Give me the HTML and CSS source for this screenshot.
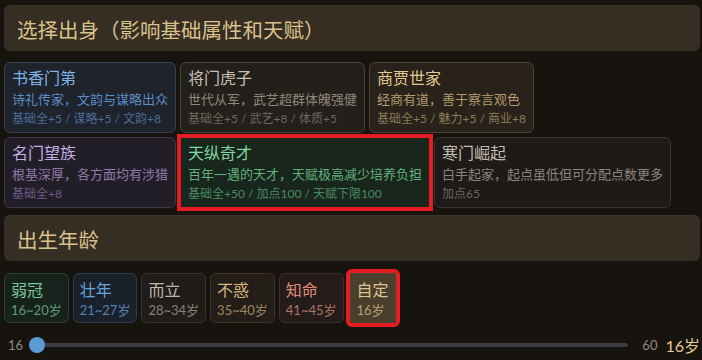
FILE: index.html
```html
<!DOCTYPE html>
<html lang="zh-CN">

<head>
    <meta charset="UTF-8">
    <meta name="viewport" content="width=device-width, initial-scale=1.0">
    <title>出身与年龄</title>
    <link rel="stylesheet" href="styles.css">
</head>

<body>
    <div class="section-title">选择出身（影响基础属性和天赋）</div>

    <div class="origin-list">
        <div class="card card-blue">
            <div class="card-name">书香门第</div>
            <div class="card-desc">诗礼传家，文韵与谋略出众</div>
            <div class="card-stats">基础全+5 / 谋略+5 / 文韵+8</div>
        </div>
        <div class="card card-brown">
            <div class="card-name">将门虎子</div>
            <div class="card-desc">世代从军，武艺超群体魄强健</div>
            <div class="card-stats">基础全+5 / 武艺+8 / 体质+5</div>
        </div>
        <div class="card card-gold">
            <div class="card-name">商贾世家</div>
            <div class="card-desc">经商有道，善于察言观色</div>
            <div class="card-stats">基础全+5 / 魅力+5 / 商业+8</div>
        </div>
        <div class="card card-purple">
            <div class="card-name">名门望族</div>
            <div class="card-desc">根基深厚，各方面均有涉猎</div>
            <div class="card-stats">基础全+8</div>
        </div>
        <div class="card card-green selected">
            <div class="card-name">天纵奇才</div>
            <div class="card-desc">百年一遇的天才，天赋极高减少培养负担</div>
            <div class="card-stats">基础全+50 / 加点100 / 天赋下限100</div>
        </div>
        <div class="card card-gray">
            <div class="card-name">寒门崛起</div>
            <div class="card-desc">白手起家，起点虽低但可分配点数更多</div>
            <div class="card-stats">加点65</div>
        </div>
    </div>

    <div class="section-title">出生年龄</div>

    <div class="age-list">
        <div class="age age-green">
            <div class="age-name">弱冠</div>
            <div class="age-range">16~20岁</div>
        </div>
        <div class="age age-blue">
            <div class="age-name">壮年</div>
            <div class="age-range">21~27岁</div>
        </div>
        <div class="age age-gray">
            <div class="age-name">而立</div>
            <div class="age-range">28~34岁</div>
        </div>
        <div class="age age-gold">
            <div class="age-name">不惑</div>
            <div class="age-range">35~40岁</div>
        </div>
        <div class="age age-red">
            <div class="age-name">知命</div>
            <div class="age-range">41~45岁</div>
        </div>
        <div class="age age-custom selected">
            <div class="age-name">自定</div>
            <div class="age-range" id="customAge">16岁</div>
        </div>
    </div>

    <div class="slider-row">
        <span class="slider-min">16</span>
        <input type="range" id="ageSlider" class="slider" min="16" max="60" value="16">
        <span class="slider-max">60</span>
        <span class="slider-value" id="ageValue">16岁</span>
    </div>

    <script>
        const slider = document.getElementById('ageSlider');

        slider.addEventListener('input', function () {
            document.getElementById('ageValue').textContent = slider.value + '岁';
            document.getElementById('customAge').textContent = slider.value + '岁';
        });

        document.querySelectorAll('.card').forEach(function (card) {
            card.addEventListener('click', function () {
                document.querySelector('.card.selected').classList.remove('selected');
                card.classList.add('selected');
            });
        });
    </script>
</body>

</html>
```

FILE: styles.css
```css
* {
    box-sizing: border-box;
    margin: 0;
    padding: 0;
}

body {
    background-color: #17130f;
    padding: 5px 2px 0 4px;
    font-family: 'Lato', 'Noto Sans CJK SC', sans-serif;
}

.section-title {
    display: flex;
    align-items: center;
    height: 46px;
    padding: 0 13px;
    background-color: #362d23;
    border-top: 1px solid #3e342a;
    border-radius: 6px;
    color: #d9c28c;
    font-size: 20.5px;
}

.origin-list {
    display: flex;
    flex-wrap: wrap;
    gap: 4px;
    margin: 11px 0 7px;
}

.card {
    padding: 4px 7px 3px;
    border: 1px solid;
    border-radius: 6px;
    cursor: pointer;
}

.card-name {
    font-size: 16px;
    line-height: 22px;
}

.card-desc {
    font-size: 13px;
    line-height: 20px;
}

.card-stats {
    font-size: 12px;
    line-height: 20px;
}

.card.selected {
    outline: 4px solid #e41d23;
    outline-offset: -1px;
    border-radius: 0;
}

.card-blue { background-color: #1e232c; border-color: #38414f; }
.card-blue .card-name { color: #7eb0e6; }
.card-blue .card-desc { color: #5c8cc4; }
.card-blue .card-stats { color: #4a6e98; }

.card-brown { background-color: #231f1b; border-color: #4a433a; }
.card-brown .card-name { color: #c9c0b2; }
.card-brown .card-desc { color: #908779; }
.card-brown .card-stats { color: #6e675d; }

.card-gold { background-color: #28221a; border-color: #4d4333; }
.card-gold .card-name { color: #e3c894; }
.card-gold .card-desc { color: #b39b6e; }
.card-gold .card-stats { color: #8c7a58; }

.card-purple { background-color: #221e27; border-color: #3e3846; }
.card-purple .card-name { color: #c4aee6; }
.card-purple .card-desc { color: #8e7aa8; }
.card-purple .card-stats { color: #6c5c86; }

.card-green { background-color: #18261d; border-color: #2c4a36; }
.card-green .card-name { color: #82d89e; }
.card-green .card-desc { color: #62b07c; }
.card-green .card-stats { color: #4a8a60; }

.card-gray { background-color: #1d1a17; border-color: #3a342e; }
.card-gray .card-name { color: #c4bcb2; }
.card-gray .card-desc { color: #8c857c; }
.card-gray .card-stats { color: #6c665e; }

.age-list {
    display: flex;
    gap: 4px;
    margin-top: 12px;
}

.age {
    padding: 4px 6px 2px;
    border: 1px solid;
    border-radius: 6px;
    cursor: pointer;
}

.age-name {
    font-size: 16px;
    line-height: 23px;
}

.age-range {
    font-size: 13px;
    line-height: 19px;
}

.age.selected {
    margin-left: 2px;
    outline: 4px solid #e41d23;
    outline-offset: 0;
}

.age-green { background-color: #18221d; border-color: #2d3f35; }
.age-green .age-name { color: #78c898; }
.age-green .age-range { color: #5c9c78; }

.age-blue { background-color: #1a212a; border-color: #2c3a48; }
.age-blue .age-name { color: #68a4dc; }
.age-blue .age-range { color: #5384b4; }

.age-gray { background-color: #201c19; border-color: #3a332c; }
.age-gray .age-name { color: #c2b8aa; }
.age-gray .age-range { color: #8a8176; }

.age-gold { background-color: #231e18; border-color: #3d3327; }
.age-gold .age-name { color: #d6b67e; }
.age-gold .age-range { color: #9e8660; }

.age-red { background-color: #251b19; border-color: #3e2e29; }
.age-red .age-name { color: #e08c7c; }
.age-red .age-range { color: #ad7566; }

.age-custom { background-color: #4a3e2d; border-color: #4f4230; border-radius: 2px; }
.age-custom .age-name { color: #dcc493; }
.age-custom .age-range { color: #b9a173; }

.slider-row {
    display: flex;
    align-items: center;
    gap: 6px;
    margin-top: 10px;
    padding-left: 4px;
}

.slider-min,
.slider-max {
    color: #8e8a85;
    font-size: 13px;
}

.slider-max {
    margin-left: 8px;
}

.slider-value {
    margin-left: 2px;
    color: #e6c98f;
    font-size: 16px;
}

.slider {
    flex: 1;
    height: 16px;
    -webkit-appearance: none;
    appearance: none;
    background: transparent;
}

.slider::-webkit-slider-runnable-track {
    height: 4px;
    background-color: #3a3b45;
    border-radius: 2px;
}

.slider::-webkit-slider-thumb {
    -webkit-appearance: none;
    width: 16px;
    height: 16px;
    margin-top: -6px;
    background-color: #5b9bd5;
    border-radius: 50%;
}
```
